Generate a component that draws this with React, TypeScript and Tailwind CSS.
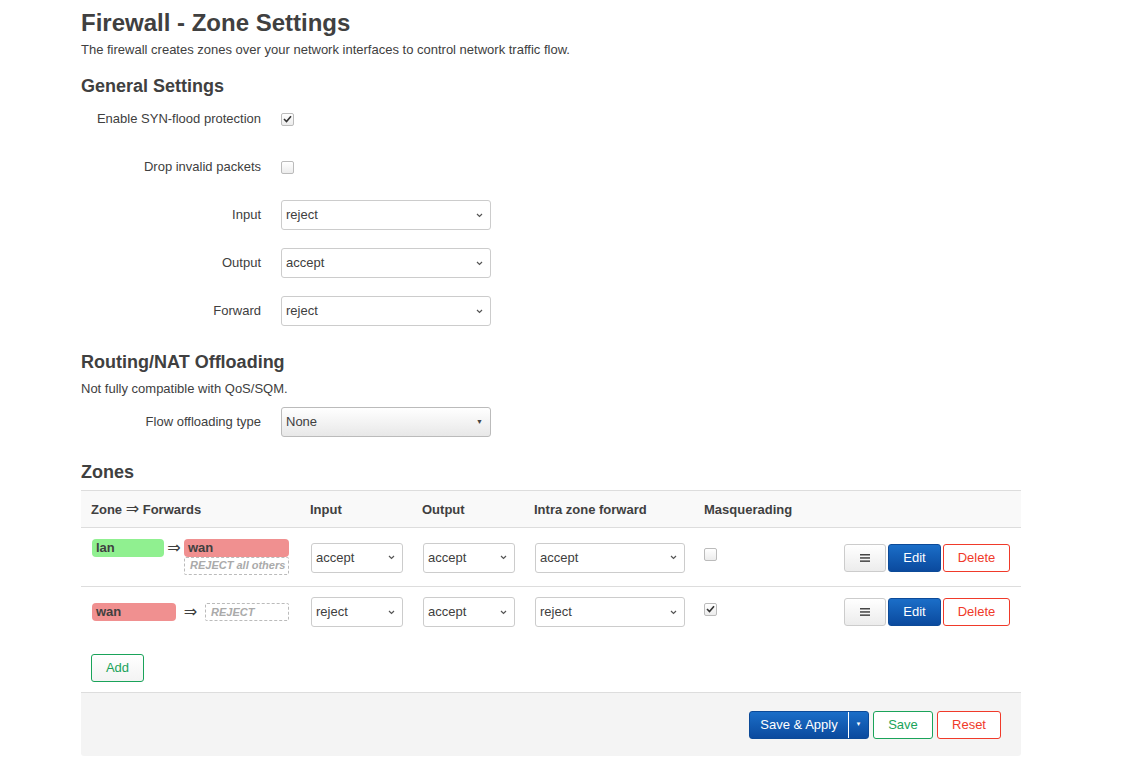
import React from 'react';

const Chevron = () => (
    <svg width="7" height="5" viewBox="0 0 7 5" className="shrink-0">
        <polyline points="1,1 3.5,3.5 6,1" fill="none" stroke="#555" strokeWidth="1.2" />
    </svg>
);

const Select = ({ value, className = '' }: { value: string; className?: string }) => (
    <div
        className={`flex h-[30px] items-center justify-between rounded-[3px] border border-[#ccc] bg-white pl-[4px] pr-[7px] text-[13px] text-[#404040] ${className}`}
    >
        <span>{value}</span>
        <Chevron />
    </div>
);

const Checkbox = ({ checked }: { checked?: boolean }) => (
    <div className="flex h-[13px] w-[13px] items-center justify-center rounded-[2px] border border-[#bbb] bg-gradient-to-b from-white to-[#ececec]">
        {checked && (
            <svg width="9" height="8" viewBox="0 0 9 8">
                <polyline points="1,4 3.5,6.5 8,1.2" fill="none" stroke="#333" strokeWidth="1.6" />
            </svg>
        )}
    </div>
);

const FieldRow = ({ label, children }: { label: string; children: React.ReactNode }) => (
    <div className="flex h-[48px] items-center">
        <div className="w-[180px] text-right text-[13px] text-[#404040]">{label}</div>
        <div className="ml-[20px] flex items-center">{children}</div>
    </div>
);

const Badge = ({ name, color, className = '' }: { name: string; color: string; className?: string }) => (
    <div className={`flex h-[18px] items-center rounded-[4px] px-[4px] text-[13px] font-bold text-[#404040] ${color} ${className}`}>
        {name}
    </div>
);

const Dashed = ({ text, className = '' }: { text: string; className?: string }) => (
    <div className={`flex h-[18px] items-center rounded-[2px] border border-dashed border-[#bbb] pl-[5px] text-[11px] font-bold italic text-[#aaa] ${className}`}>
        {text}
    </div>
);

const Arrow = () => (
    <span className="font-['DejaVu_Sans',sans-serif] text-[16px] font-normal leading-[18px]">⇒</span>
);

const Actions = () => (
    <div className="flex items-center gap-[2px]">
        <button className="flex h-[28px] w-[42px] items-center justify-center rounded-[3px] border border-[#ccc] bg-gradient-to-b from-white to-[#ececec]">
            <svg width="10" height="8" viewBox="0 0 10 8">
                <rect x="0" y="0" width="10" height="1.5" fill="#444" />
                <rect x="0" y="3.2" width="10" height="1.5" fill="#444" />
                <rect x="0" y="6.4" width="10" height="1.5" fill="#444" />
            </svg>
        </button>
        <button className="h-[28px] w-[53px] rounded-[3px] border border-[#0c4a98] bg-gradient-to-b from-[#1b6ec8] to-[#0b4a9e] text-[13px] text-white">
            Edit
        </button>
        <button className="h-[28px] w-[67px] rounded-[3px] border border-[#f03a2a] bg-white text-[13px] text-[#f03a2a]">
            Delete
        </button>
    </div>
);

const cols = 'grid grid-cols-[220px_112px_112px_170px_1fr]';

export default function App() {
    return (
        <div className="min-h-[771px] bg-white font-['Liberation_Sans',Arial,sans-serif] text-[#404040]">
            <div className="ml-[81px] w-[940px] pt-[9px]">
                <h1 className="text-[24px] font-bold leading-[28px]">Firewall - Zone Settings</h1>
                <p className="mt-[5px] text-[13px] leading-[16px]">
                    The firewall creates zones over your network interfaces to control network traffic flow.
                </p>

                <h2 className="mt-[17px] text-[18px] font-bold leading-[22px]">General Settings</h2>
                <div className="-mt-[2px]">
                    <FieldRow label="Enable SYN-flood protection">
                        <Checkbox checked />
                    </FieldRow>
                    <FieldRow label="Drop invalid packets">
                        <Checkbox />
                    </FieldRow>
                    <FieldRow label="Input">
                        <Select value="reject" className="w-[210px]" />
                    </FieldRow>
                    <FieldRow label="Output">
                        <Select value="accept" className="w-[210px]" />
                    </FieldRow>
                    <FieldRow label="Forward">
                        <Select value="reject" className="w-[210px]" />
                    </FieldRow>
                </div>

                <h2 className="mt-[16px] text-[18px] font-bold leading-[22px]">Routing/NAT Offloading</h2>
                <p className="mt-[8px] text-[13px] leading-[16px]">Not fully compatible with QoS/SQM.</p>
                <div className="mt-[5px] flex h-[40px] items-center">
                    <div className="w-[180px] text-right text-[13px]">Flow offloading type</div>
                    <div className="ml-[20px] flex h-[30px] w-[210px] items-center justify-between rounded-[3px] border border-[#bbb] bg-gradient-to-b from-white to-[#e8e8e8] pl-[4px] pr-[7px] text-[13px]">
                        <span>None</span>
                        <span className="text-[7px] text-[#444]">▼</span>
                    </div>
                </div>

                <h2 className="mt-[19px] text-[18px] font-bold leading-[22px]">Zones</h2>
                <div className="mt-[7px] border-t border-[#ddd]">
                    <div className={`${cols} h-[37px] items-center border-b border-[#ddd] bg-[#f9f9f9] pt-[1px] text-[13px] font-bold`}>
                        <div className="pl-[10px]">
                            Zone <Arrow /> Forwards
                        </div>
                        <div className="pl-[9px]">Input</div>
                        <div className="pl-[9px]">Output</div>
                        <div className="pl-[9px]">Intra zone forward</div>
                        <div className="pl-[9px]">Masquerading</div>
                    </div>

                    <div className={`${cols} h-[59px] items-center border-b border-[#ddd]`}>
                        <div className="-mt-[1px] pl-[11px]">
                            <div className="flex w-[197px] items-start justify-between">
                                <Badge name="lan" color="bg-[#90f090]" className="w-[72px]" />
                                <Arrow />
                                <div className="flex w-[105px] flex-col">
                                    <Badge name="wan" color="bg-[#f09090]" />
                                    <Dashed text="REJECT all others" className="h-[17px]" />
                                </div>
                            </div>
                        </div>
                        <div className="mt-[1px] px-[10px]"><Select value="accept" /></div>
                        <div className="mt-[1px] px-[10px]"><Select value="accept" /></div>
                        <div className="mt-[1px] px-[10px]"><Select value="accept" /></div>
                        <div className="mt-[1px] flex items-center justify-between pl-[9px] pr-[11px]">
                            <div className="-mt-[6px]"><Checkbox /></div>
                            <Actions />
                        </div>
                    </div>

                    <div className={`${cols} h-[54px] items-center pb-[4px]`}>
                        <div className="pl-[11px]">
                            <div className="flex w-[197px] items-center justify-between">
                                <Badge name="wan" color="bg-[#f09090]" className="w-[84px]" />
                                <Arrow />
                                <Dashed text="REJECT" className="w-[84px]" />
                            </div>
                        </div>
                        <div className="px-[10px]"><Select value="reject" /></div>
                        <div className="px-[10px]"><Select value="accept" /></div>
                        <div className="px-[10px]"><Select value="reject" /></div>
                        <div className="flex items-center justify-between pl-[9px] pr-[11px]">
                            <div className="-mt-[6px]"><Checkbox checked /></div>
                            <Actions />
                        </div>
                    </div>

                    <div className="px-[10px] pt-[13px] pb-[10px]">
                        <button className="h-[28px] w-[53px] rounded-[3px] border border-[#1aa35a] bg-gradient-to-b from-white to-[#f3f3f3] text-[13px] text-[#1aa35a]">
                            Add
                        </button>
                    </div>
                </div>

                <div className="flex h-[64px] items-center justify-end gap-[4px] rounded-b-[3px] border-t border-[#ddd] bg-[#f4f4f4] pr-[20px]">
                    <div className="flex h-[28px] overflow-hidden rounded-[3px] border border-[#0c4a98] bg-gradient-to-b from-[#1b6ec8] to-[#0b4a9e] text-[13px] text-white">
                        <span className="flex w-[99px] items-center justify-center border-r border-white">Save &amp; Apply</span>
                        <span className="flex w-[19px] items-center justify-center text-[6px]">▼</span>
                    </div>
                    <button className="h-[28px] w-[60px] rounded-[3px] border border-[#1aa35a] bg-white text-[13px] text-[#1aa35a]">
                        Save
                    </button>
                    <button className="h-[28px] w-[64px] rounded-[3px] border border-[#f03a2a] bg-white text-[13px] text-[#f03a2a]">
                        Reset
                    </button>
                </div>
            </div>
        </div>
    );
}
